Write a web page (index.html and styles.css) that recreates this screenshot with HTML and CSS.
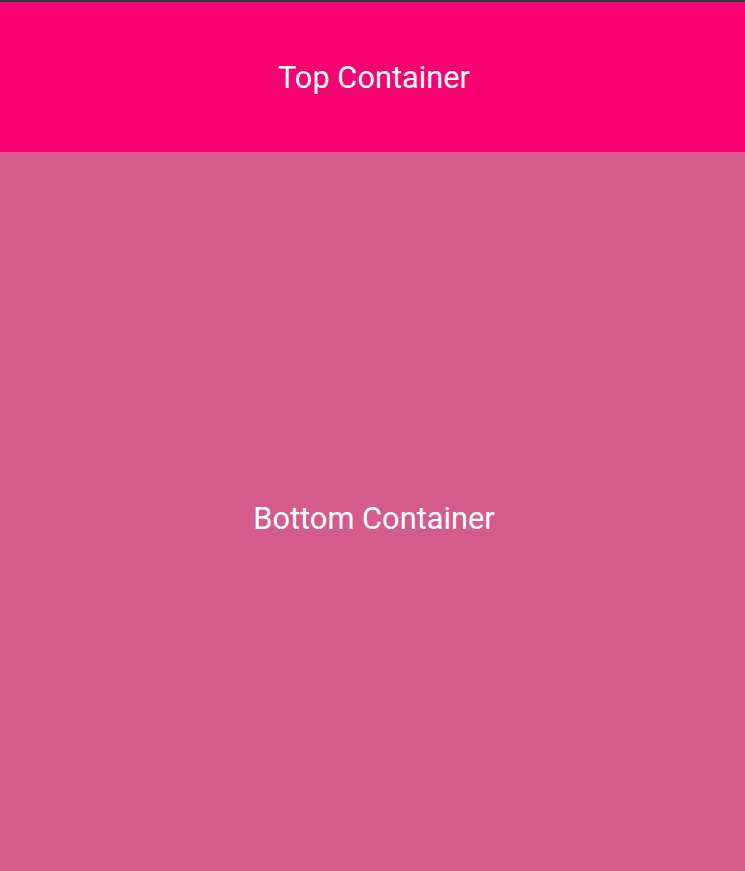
FILE: index.html
```html
<!DOCTYPE html>
<html>
<head>
<meta charset="utf-8">
<link rel="stylesheet" href="styles.css">
</head>
<body>
<div class="page">
  <div class="topbar"></div>
  <div class="top">Top Container</div>
  <div class="bottom">Bottom Container</div>
</div>
</body>
</html>
```
FILE: styles.css
```css
html, body { margin: 0; padding: 0; }
body { font-family: Roboto, "Noto Sans", sans-serif; overflow: hidden; }
.page { display: flex; flex-direction: column; height: 871px; overflow: hidden; }
.topbar { height: 2px; background: #303438; flex: none; }
.top {
  flex: none;
  height: 150px;
  background: #F70070;
  color: #fff;
  font-size: 30.8px;
  padding-left: 3px;
  display: flex; align-items: center; justify-content: center;
}
.bottom {
  flex: none;
  height: 732px;
  background: #D45B8C;
  color: #fff;
  font-size: 30.8px;
  padding-left: 3px;
  display: flex; align-items: center; justify-content: center;
}
```
